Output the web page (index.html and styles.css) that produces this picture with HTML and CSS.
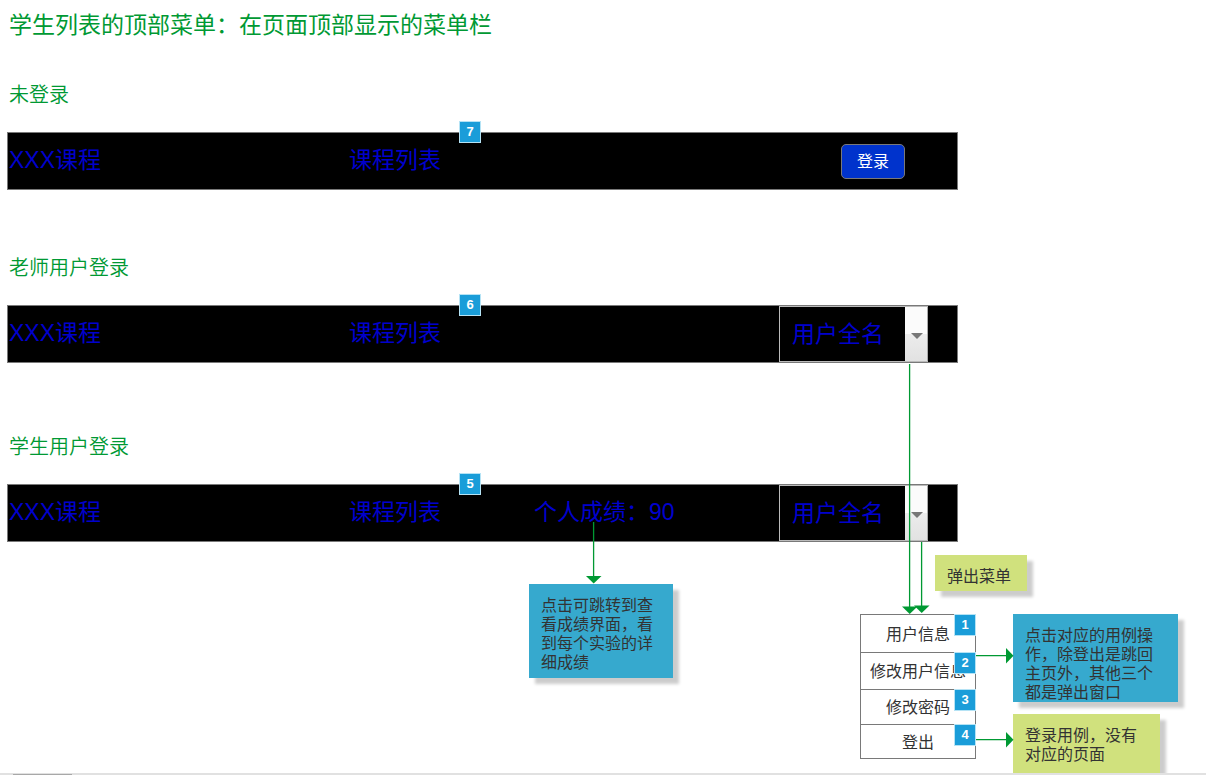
FILE: index.html
```html
<!DOCTYPE html>
<html lang="zh-CN">
<head>
<meta charset="utf-8">
<meta name="viewport" content="width=device-width, initial-scale=1">
<title>学生列表的顶部菜单</title>
<link rel="stylesheet" href="styles.css">
</head>
<body>
<main class="page">
  <h1 class="title">学生列表的顶部菜单：在页面顶部显示的菜单栏</h1>

  <section class="state">
    <h2 class="state-name">未登录</h2>
    <nav class="bar">
      <a class="bar-link" href="#home">XXX课程</a>
      <a class="bar-link" href="#courses">课程列表</a>
      <span></span>
      <button class="login" type="button">登录</button>
      <span class="badge bar-badge">7</span>
    </nav>
  </section>

  <section class="state">
    <h2 class="state-name">老师用户登录</h2>
    <nav class="bar">
      <a class="bar-link" href="#home">XXX课程</a>
      <a class="bar-link" href="#courses">课程列表</a>
      <span></span>
      <div class="user">
        <select class="user-select" aria-label="用户"><option>用户全名</option></select>
        <span class="user-arrow"></span>
      </div>
      <span class="badge bar-badge">6</span>
    </nav>
  </section>

  <section class="state state-last">
    <h2 class="state-name">学生用户登录</h2>
    <nav class="bar">
      <a class="bar-link" href="#home">XXX课程</a>
      <a class="bar-link" href="#courses">课程列表</a>
      <a class="bar-link" href="#score">个人成绩：90</a>
      <div class="user">
        <select class="user-select" aria-label="用户"><option>用户全名</option></select>
        <span class="user-arrow"></span>
      </div>
      <span class="badge bar-badge">5</span>
    </nav>
  </section>

  <ul class="menu">
    <li class="menu-row"><button class="menu-item" type="button">用户信息</button><span class="badge menu-badge">1</span></li>
    <li class="menu-row"><button class="menu-item" type="button">修改用户信息</button><span class="badge menu-badge">2</span></li>
    <li class="menu-row"><button class="menu-item" type="button">修改密码</button><span class="badge menu-badge">3</span></li>
    <li class="menu-row"><button class="menu-item" type="button">登出</button><span class="badge menu-badge">4</span></li>
  </ul>

  <p class="note note-blue note-score">点击可跳转到查看成绩界面，看到每个实验的详细成绩</p>
  <p class="note note-green note-popup">弹出菜单</p>
  <p class="note note-blue note-actions">点击对应的用例操作，除登出是跳回主页外，其他三个都是弹出窗口</p>
  <p class="note note-green note-logout">登录用例，没有对应的页面</p>

  <svg class="connectors" width="1206" height="773" viewBox="0 0 1206 773" aria-hidden="true">
    <g fill="none" stroke="#009933" stroke-width="1.3">
      <path d="M593.6 522V577M909.6 364V607M921.6 542V607M976 655.6H1007M976 739.6H1007"/>
    </g>
    <g fill="#009933">
      <path d="M586 576H601.5L593.7 583.5Z"/>
      <path d="M902 606.500H917.500L909.700 614Z"/>
      <path d="M914 605.500H929.500L921.700 613Z"/>
      <path d="M1006 648V663.500L1013.500 655.700Z"/>
      <path d="M1006 732V747.500L1013.500 739.700Z"/>
    </g>
  </svg>

  <div class="scroll-track"><div class="scroll-thumb"></div></div>
</main>
</body>
</html>
```
FILE: styles.css
```css
* {
  box-sizing: border-box;
}

body {
  margin: 0;
  background: #fff;
  font-family: "Liberation Sans", "Noto Sans CJK SC", sans-serif;
  font-weight: 400;
  color: #333;
}

button,
select {
  font: inherit;
  cursor: pointer;
}

.page {
  position: relative;
  display: flex;
  flex-direction: column;
  min-height: 100vh;
  padding-top: 10px;
  overflow: clip;
}

.title {
  margin: 0 0 41px 9px;
  font-size: 23px;
  font-weight: 400;
  line-height: 30px;
  color: #093;
}

.state {
  max-width: 958px;
  margin-bottom: 64px;
  padding-left: 7px;
}

.state:nth-of-type(2) {
  margin-bottom: 70px;
}

.state-last {
  margin-bottom: 0;
}

.state-name {
  margin: 0 0 23px 2px;
  font-size: 20px;
  font-weight: 350;
  line-height: 28px;
  color: #093;
}

.bar {
  position: relative;
  display: grid;
  grid-template-columns: 340px 185px 1fr auto;
  align-items: center;
  height: 58px;
  padding: 0 29px 0 1px;
  border: 1px solid #797979;
  background: #000;
}

.bar-link {
  padding-bottom: 2px;
  font-size: 23px;
  line-height: 30px;
  color: #0000cd;
  text-decoration: none;
}

.login {
  width: 64px;
  height: 35px;
  margin-right: 23px;
  padding: 0 0 2px;
  border: 1px solid #797979;
  border-radius: 5px;
  background: #03c;
  color: #fff;
  font-size: 16px;
}

.user {
  position: relative;
  width: 149px;
  height: 56px;
}

.user-select {
  appearance: none;
  width: 100%;
  height: 100%;
  padding: 0 24px 0 12px;
  border: 1px solid #bbb;
  border-radius: 0;
  background: #000;
  color: #0000cd;
  font-size: 23px;
}

.user-arrow {
  position: absolute;
  top: 1px;
  right: 0;
  bottom: 1px;
  display: grid;
  place-items: center;
  width: 23px;
  padding: 4px 0 0 1px;
  border-right: 1px solid #aaa;
  background: linear-gradient(#fbfbfb 0 50%, #ececec 50%, #e2e2e2);
  pointer-events: none;
}

.user-arrow::after {
  content: "";
  border: 6px solid transparent;
  border-top-color: #777;
  border-bottom-width: 0;
}

.badge {
  position: absolute;
  display: grid;
  place-items: center;
  width: 22px;
  height: 22px;
  border: 1px solid #b5e3f5;
  background: #1a9dd9;
  color: #fff;
  font-size: 13px;
  font-weight: 700;
  line-height: 20px;
}

.bar-badge {
  top: -12px;
  left: 451px;
}

.menu {
  position: absolute;
  top: 614px;
  left: 860px;
  display: grid;
  grid-template-rows: 38px 37px 35px 34px;
  width: 116px;
  margin: 0;
  padding: 0;
  border: 1px solid #797979;
  border-bottom: 0;
  background: #fff;
  list-style: none;
}

.menu-row {
  position: relative;
  border-bottom: 1px solid #797979;
}

.menu-item {
  width: 100%;
  height: 100%;
  padding: 0 0 2px;
  border: 0;
  background: none;
  color: #333;
  font-size: 16px;
  white-space: nowrap;
}

.menu-badge {
  top: -1px;
  right: -1px;
}

.note {
  position: absolute;
  margin: 0;
  padding: 12px;
  font-size: 16px;
  line-height: 19px;
  box-shadow: 6px 6px 3px rgba(0, 0, 0, 0.2);
}

.note-blue {
  background: #36a9ce;
}

.note-green {
  background: #d0e17d;
}

.note-score {
  top: 584px;
  left: 529px;
  width: 144px;
  height: 94px;
}

.note-popup {
  top: 555px;
  left: 935px;
  width: 92px;
  height: 36px;
}

.note-actions {
  top: 614px;
  left: 1013px;
  width: 165px;
  height: 88px;
}

.note-logout {
  top: 714px;
  left: 1013px;
  width: 147px;
  height: 60px;
}

.connectors {
  position: absolute;
  top: 0;
  left: 0;
  pointer-events: none;
}

.scroll-track {
  position: relative;
  height: 2px;
  margin-top: auto;
  padding: 1px 0 0 13px;
  background: #e1e1e1;
}

.scroll-thumb {
  width: 59px;
  height: 1px;
  background: #a8a8a8;
}
```
